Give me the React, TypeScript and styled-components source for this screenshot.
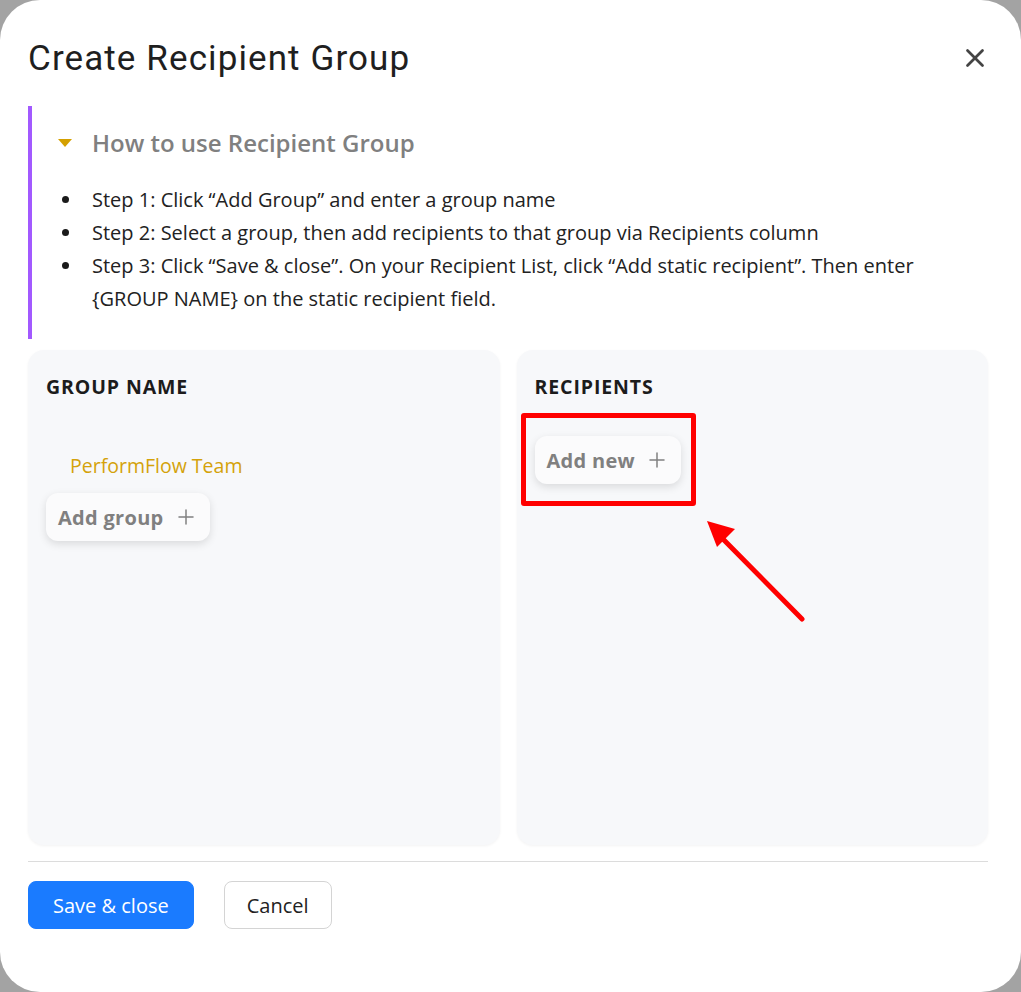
import styled, { createGlobalStyle } from "styled-components";
import { Plus, X } from "lucide-react";

const GlobalStyle = createGlobalStyle`
  html, body {
    margin: 0;
    padding: 0;
    background: #a3a3a3;
  }
  * {
    box-sizing: border-box;
  }
`;

const Modal = styled.div`
  width: 1021px;
  height: 992px;
  background: #fff;
  border-radius: 40px;
  padding: 24px 33px 0 28px;
  display: flex;
  flex-direction: column;
  font-family: "Open Sans", "Noto Sans", sans-serif;
  color: #222;
`;

const Header = styled.div`
  display: flex;
  align-items: center;
  justify-content: space-between;
  height: 68px;
`;

const Title = styled.h1`
  margin: 0;
  font-family: Roboto, "Noto Sans", sans-serif;
  font-weight: 400;
  font-size: 35px;
  color: #1f1f1f;
  letter-spacing: 1.1px;
`;

const CloseButton = styled.button`
  border: none;
  background: none;
  padding: 0;
  color: #444;
  display: flex;
  cursor: pointer;
  margin-right: -2px;
`;

const Guide = styled.section`
  margin-top: 14px;
  border-left: 4px solid #a259ff;
  padding: 20px 0 24px 26px;
`;

const GuideToggle = styled.div`
  display: flex;
  align-items: center;
  gap: 20px;
  font-size: 24px;
  font-weight: 600;
  color: #808080;
`;

const Caret = styled.span`
  width: 0;
  height: 0;
  border-left: 7px solid transparent;
  border-right: 7px solid transparent;
  border-top: 8px solid #d4a000;
`;

const Steps = styled.ul`
  margin: 24px 0 0 0;
  padding-left: 34px;
  list-style: none;
  font-size: 20px;
  line-height: 33px;
  color: #222;
`;

const Step = styled.li`
  position: relative;

  &::before {
    content: "";
    position: absolute;
    left: -30px;
    top: 13px;
    width: 7px;
    height: 7px;
    border-radius: 50%;
    background: #1a1a1a;
  }
`;

const Columns = styled.div`
  display: grid;
  grid-template-columns: 1fr 1fr;
  gap: 17px;
  margin-top: 11px;
  height: 495px;
`;

const Panel = styled.div`
  position: relative;
  background: #f7f8fa;
  border-radius: 16px;
  box-shadow: 0 1px 3px rgba(0, 0, 0, 0.05);
  padding: 24px 18px;
  display: flex;
  flex-direction: column;
  align-items: flex-start;
`;

const PanelTitle = styled.h3`
  margin: 0;
  font-size: 19.5px;
  font-weight: 700;
  color: #1c1c1c;
  letter-spacing: 0.9px;
  line-height: 26px;
`;

const GroupItem = styled.div`
  margin: 52px 0 0 24px;
  font-size: 19.5px;
  color: #d4a20a;
  line-height: 28px;
`;

const AddButton = styled.button<{ $top: number }>`
  margin-top: ${(p) => p.$top}px;
  height: 48px;
  display: flex;
  align-items: center;
  gap: 10px;
  padding: 0 12px;
  border: none;
  border-radius: 12px;
  background: #fbfbfc;
  box-shadow: 0 3px 8px rgba(0, 0, 0, 0.12);
  font-family: "Open Sans", "Noto Sans", sans-serif;
  font-size: 20px;
  font-weight: 700;
  letter-spacing: 0.3px;
  color: #808080;
  cursor: pointer;
`;

const Highlight = styled.div`
  position: absolute;
  left: 4px;
  top: 63px;
  width: 175px;
  height: 93px;
  border: 5px solid #ff0000;
  border-radius: 3px;
  pointer-events: none;
`;

const Arrow = styled.svg`
  position: absolute;
  left: 178px;
  top: 159px;
  pointer-events: none;
`;

const Divider = styled.hr`
  margin: 16px 0 0 0;
  border: none;
  border-top: 1.5px solid #dcdcdc;
`;

const Footer = styled.div`
  display: flex;
  gap: 30px;
  margin-top: 19px;
`;

const FooterButton = styled.button<{ $primary?: boolean }>`
  height: 48px;
  padding: 0 ${(p) => (p.$primary ? 24 : 22)}px;
  border-radius: 8px;
  font-family: "Open Sans", "Noto Sans", sans-serif;
  font-size: 20px;
  cursor: pointer;
  border: 1px solid ${(p) => (p.$primary ? "#1a7bff" : "#d4d4d4")};
  background: ${(p) => (p.$primary ? "#1a7bff" : "#fff")};
  color: ${(p) => (p.$primary ? "#fff" : "#222")};
`;

export default function App() {
  return (
    <>
      <GlobalStyle />
      <Modal>
        <Header>
          <Title>Create Recipient Group</Title>
          <CloseButton aria-label="Close">
            <X size={30} strokeWidth={2.2} />
          </CloseButton>
        </Header>

        <Guide>
          <GuideToggle>
            <Caret />
            How to use Recipient Group
          </GuideToggle>
          <Steps>
            <Step>Step 1: Click “Add Group” and enter a group name</Step>
            <Step>Step 2: Select a group, then add recipients to that group via Recipients column</Step>
            <Step>
              Step 3: Click “Save &amp; close”. On your Recipient List, click “Add static recipient”. Then enter
              <br />
              {"{GROUP NAME}"} on the static recipient field.
            </Step>
          </Steps>
        </Guide>

        <Columns>
          <Panel>
            <PanelTitle>GROUP NAME</PanelTitle>
            <GroupItem>PerformFlow Team</GroupItem>
            <AddButton $top={13}>
              Add group
              <Plus size={24} strokeWidth={1.5} />
            </AddButton>
          </Panel>
          <Panel>
            <PanelTitle>RECIPIENTS</PanelTitle>
            <AddButton $top={36}>
              Add new
              <Plus size={24} strokeWidth={1.5} />
            </AddButton>
            <Highlight />
            <Arrow width="120" height="120" viewBox="0 0 120 120">
              <line x1="107" y1="110" x2="24" y2="26" stroke="#ff0000" strokeWidth="5" strokeLinecap="round" />
              <polygon points="12,12 40,20 22,38" fill="#ff0000" />
            </Arrow>
          </Panel>
        </Columns>

        <Divider />

        <Footer>
          <FooterButton $primary>Save &amp; close</FooterButton>
          <FooterButton>Cancel</FooterButton>
        </Footer>
      </Modal>
    </>
  );
}
